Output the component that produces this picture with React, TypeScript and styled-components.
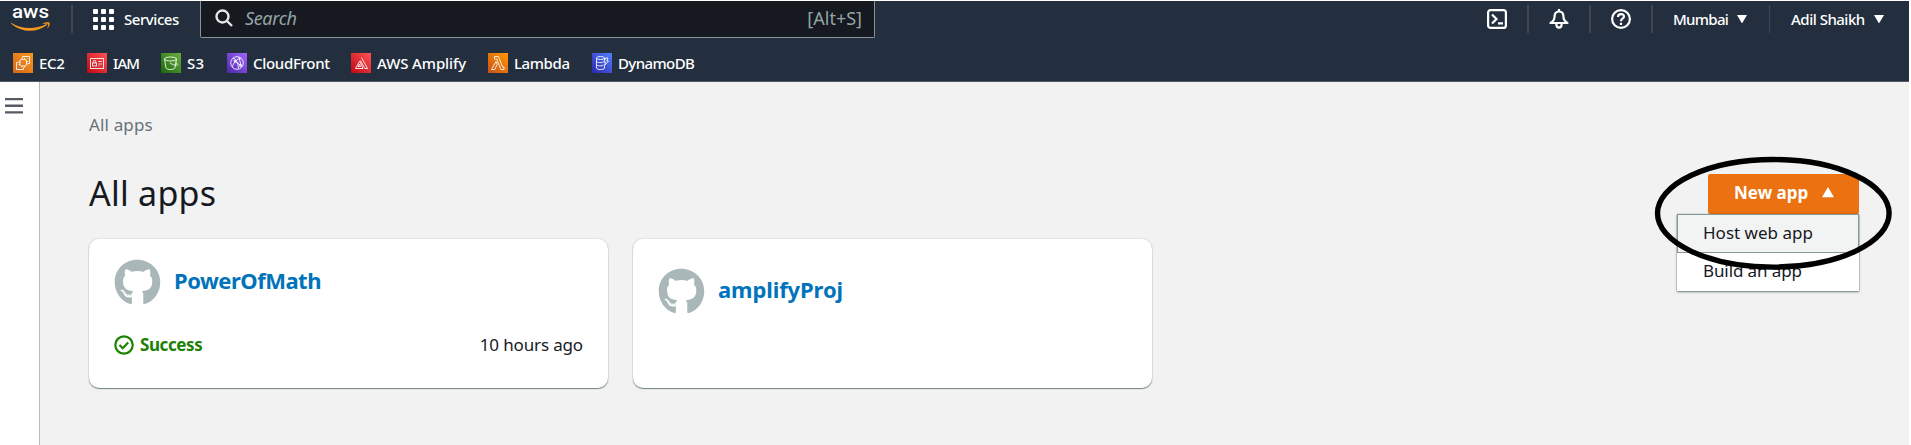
import React from 'react';
import styled, { createGlobalStyle } from 'styled-components';
import { FaGithub } from 'react-icons/fa';

const Global = createGlobalStyle`
  * { box-sizing: border-box; }
  body { margin: 0; background: #fff; font-family: "Noto Sans", "Open Sans", sans-serif; color: #16191f; }
`;

const Page = styled.div`
  width: 1911px;
  height: 445px;
  display: flex;
  flex-direction: column;
  overflow: hidden;
`;

const Header = styled.header`
  height: 82px;
  width: 1909px;
  background: #232f3e;
  border-top: 1px solid #fff;
  border-bottom: 1px solid #545b64;
  color: #fff;
`;

const TopRow = styled.div`
  display: flex;
  align-items: flex-start;
  height: 41px;
`;

const Line = styled.span<{ $size: number; $gap?: number; $weight?: number }>`
  display: block;
  white-space: nowrap;
  font-size: ${p => p.$size}px;
  letter-spacing: ${p => p.$gap ?? 0}px;
  font-weight: ${p => p.$weight ?? 400};
`;

const Logo = styled.div`
  width: 71px;
  padding-left: 10px;
  svg { display: block; overflow: visible; }
`;

const Divider = styled.div<{ $w?: number }>`
  width: ${p => p.$w ?? 2}px;
  height: 28px;
  margin-top: 4px;
  background: #414750;
`;

const Services = styled.div`
  display: flex;
  align-items: center;
  gap: 10px;
  width: 127px;
  height: 36px;
  padding-left: 20px;
`;

const Search = styled.div`
  display: flex;
  align-items: center;
  width: 675px;
  height: 37px;
  padding: 0 12px 2px 14px;
  background: #16191f;
  border: 1px solid #879596;
  border-top: 0;
  border-radius: 0 0 2px 2px;
  color: #95a5a6;
  svg { margin-right: 12px; }
`;

const Placeholder = styled(Line)`
  flex: 1;
  font-style: italic;
`;

const Tools = styled.div`
  display: flex;
  margin-left: auto;
`;

const IconTool = styled.div`
  width: 60px;
  height: 36px;
  display: flex;
  align-items: center;
  justify-content: center;
`;

const MenuTool = styled.div<{ $w: number; $pad: number }>`
  width: ${p => p.$w}px;
  height: 36px;
  padding-left: ${p => p.$pad}px;
  display: flex;
  align-items: center;
  gap: 9px;
`;

const Favorites = styled.nav`
  display: flex;
  align-items: center;
  height: 41px;
  padding-left: 13px;
`;

const Favorite = styled.div<{ $w: number }>`
  display: flex;
  align-items: center;
  gap: 6px;
  width: ${p => p.$w}px;
`;

const Tile = styled.span<{ $from: string; $to: string }>`
  display: block;
  flex: none;
  width: 20px;
  height: 20px;
  background: linear-gradient(45deg, ${p => p.$from}, ${p => p.$to});
  svg { display: block; }
`;

const Body = styled.div`
  flex: 1;
  display: flex;
  width: 1909px;
`;

const Rail = styled.aside`
  width: 40px;
  padding: 16px 0 0 5px;
  background: #fff;
  border-right: 1px solid #b4bbbd;
  svg { display: block; }
`;

const Main = styled.main`
  flex: 1;
  padding: 0 50px 0 49px;
  background: #f2f2f2;
`;

const Crumb = styled.div`
  height: 83px;
  padding-top: 31px;
  color: #687078;
  line-height: 24px;
`;

const TitleRow = styled.div`
  display: flex;
  justify-content: space-between;
  height: 74px;
`;

const Title = styled.h1`
  margin: 0;
  padding-top: 7px;
  line-height: 42px;
`;

const MenuAnchor = styled.div`
  position: relative;
  width: 151px;
  height: 41px;
  margin-top: 9px;
`;

const NewApp = styled.button`
  display: flex;
  align-items: center;
  gap: 14px;
  width: 151px;
  height: 40px;
  padding: 0 0 3px 26px;
  border: 0;
  border-radius: 2px;
  background: #ec7211;
  color: #fff;
  font-family: inherit;
`;

const Menu = styled.div`
  position: absolute;
  top: 40px;
  right: 0;
  width: 182px;
  background: #fff;
  box-shadow: 0 1px 2px rgba(0, 28, 36, 0.55), 0 0 1px rgba(0, 28, 36, 0.3);
`;

const MenuItem = styled.div<{ $active?: boolean }>`
  height: ${p => (p.$active ? 39 : 38)}px;
  padding-left: 25px;
  line-height: ${p => (p.$active ? 35 : 34)}px;
  border: 1px solid ${p => (p.$active ? '#879596' : 'transparent')};
  background: ${p => (p.$active ? '#f2f3f3' : '#fff')};
`;

const Highlight = styled.svg`
  position: absolute;
  left: -54px;
  top: -18px;
  overflow: visible;
`;

const Cards = styled.div`
  display: flex;
  gap: 25px;
`;

const Card = styled.section`
  width: 519px;
  height: 149px;
  padding: 0 25px;
  background: #fff;
  border-radius: 10px;
  box-shadow: 0 1px 1px rgba(0, 28, 36, 0.5), 0 0 1px 1px rgba(0, 28, 36, 0.06);
`;

const CardHead = styled.div<{ $top: number }>`
  display: flex;
  align-items: flex-start;
  gap: 13px;
  padding-top: ${p => p.$top}px;
  color: #0073bb;
  svg { color: #aab7b8; }
`;

const CardFoot = styled.div`
  display: flex;
  align-items: center;
  justify-content: space-between;
  margin-top: 27px;
  line-height: 24px;
`;

const Status = styled.div`
  display: flex;
  align-items: center;
  gap: 6px;
  color: #1d8102;
`;

const AppName = styled(Line)`
  line-height: 30px;
  padding-top: 6px;
`;

const Caret = ({ up, size = 10 }: { up?: boolean; size?: number }) => (
  <svg width={size} height={size * 0.85} viewBox="0 0 10 8.5" fill="#fff">
    <path d={up ? 'M5 0L10 8.5H0Z' : 'M0 0H10L5 8.5Z'} />
  </svg>
);

const favorites = [
  { name: 'EC2', w: 74, gap: -0.3, from: '#d4661c', to: '#f8981d', art: <><rect x="7" y="6.5" width="6.500" height="6.500" rx="1.500" /><path d="M9.500 5V3.500H16.500V10.500H15M5.500 9.500H3.500V16.500H10.500V14.500" /><path d="M9 5v1.500M11.500 5v1.500M9 13v1.500M11.500 13v1.500M5.500 9h1.500M5.500 11.500h1.500M13.500 8.500h1.500M13.500 11h1.500" /></> },
  { name: 'IAM', w: 74, gap: -0.9, from: '#bd0816', to: '#ff5252', art: <><rect x="3.500" y="5.500" width="13" height="10" /><rect x="5.500" y="10" width="4" height="3" /><path d="M6.300 10V8.500a1.200 1.200 0 012.400 0V10M11.500 8.500h3M11.500 11h2M14 11h1M11.500 13h1" /></> },
  { name: 'S3', w: 66, gap: 0.3, from: '#1b660f', to: '#6cae3e', art: <><ellipse cx="9.500" cy="6" rx="6" ry="2" /><path d="M3.500 6l1.500 9c1 2 8 2 9 0l1.500-9M9 10c3 2 7 3 7.500 1.700.2-.8-1-1.500-2-2" /></> },
  { name: 'CloudFront', w: 124, gap: -0.3, from: '#4d27a8', to: '#a166ff', art: <><circle cx="10" cy="10" r="6.300" /><path d="M6 5.500c3 0 5 4 5.500 10M14 5c-4 1-8 5-8.500 9M7 8l8 5M12 4l2 9" /><circle cx="8" cy="8" r="1" /><circle cx="13.500" cy="12.500" r="1.200" /></> },
  { name: 'AWS Amplify', w: 137, gap: -0.1, from: '#bd0816', to: '#ff5252', art: <><path d="M10.500 4.500L16.500 15.500H13.800L9.500 7.500M9 8.500L12 15.500H4.500L8.500 8.500ZM7 13.500H9.500L8.500 11Z" /></> },
  { name: 'Lambda', w: 104, gap: -0.4, from: '#c8511b', to: '#f90', art: <><path d="M6.500 3.500H10.500L14.500 14H16V16.500H12.800L8.800 6H6.500ZM8 8.500L9.200 11.500L6.800 16.500H3.500Z" /></> },
  { name: 'DynamoDB', w: 110, gap: -0.6, from: '#2e27ad', to: '#527fff', art: <><ellipse cx="8.500" cy="5" rx="4" ry="1.500" /><path d="M4.500 5v10c0 2 8 2 8 0v-2M12.500 5v2M4.500 8.300c0 1.600 6 1.600 7 .5M4.500 11.600c0 1.600 6 1.600 7 .5M13.500 5h2.500l-1.200 3h1.700l-4 4.500 1-3.500h-1.500z" /></> },
];

export default function App() {
  return (
    <Page>
      <Global />
      <Header>
        <TopRow>
          <Logo>
            <svg width="42" height="32" viewBox="0 0 42 32">
              <text x="2" y="17.300" fontFamily="Roboto" fontSize="18.500" fontWeight="500" fill="#fff" textLength="37" lengthAdjust="spacingAndGlyphs">aws</text>
              <path d="M1 21.700C11 28.200 25 28.700 36 23.200C37 22.800 37.600 23.700 36.800 24.300C27 31.800 11.500 32 1 22.400Z" fill="#f7981f" />
              <path d="M33 22.300C35.500 20.800 39 20.900 39.600 21.700C40.200 22.700 39.300 26 37 28C38 25.500 38.600 23.600 38 23C37.400 22.500 35 22.700 33 22.900Z" fill="#f7981f" />
            </svg>
          </Logo>
          <Divider />
          <Services>
            <svg width="21" height="21" viewBox="0 0 21 21" fill="#fff">
              {[0, 8, 16].map(y => [0, 8, 16].map(x => <rect key={`${x}-${y}`} x={x} y={y} width="5" height="5" rx="1" />))}
            </svg>
            <Line $size={15} $gap={-0.45} $weight={500}>Services</Line>
          </Services>
          <Search>
            <svg width="18" height="18" viewBox="0 0 18 18" fill="none" stroke="#e4e8ea" strokeWidth="2.400">
              <circle cx="7.500" cy="7.500" r="6" /><path d="M12 12l5 5" />
            </svg>
            <Placeholder $size={18} $gap={-0.35}>Search</Placeholder>
            <Line $size={18}>[Alt+S]</Line>
          </Search>
          <Tools>
            <IconTool>
              <svg width="20" height="20" viewBox="0 0 20 20" fill="none" stroke="#fff" strokeWidth="2.200">
                <rect x="1.100" y="1.100" width="17.800" height="17.800" rx="2.500" /><path d="M5 5.500L9.500 10L5 14.500M11 14.300h5" />
              </svg>
            </IconTool>
            <Divider />
            <IconTool>
              <svg width="20" height="20" viewBox="0 0 20 20" fill="none" stroke="#fff" strokeWidth="2.200" strokeLinejoin="round">
                <path d="M10 0v3M10 2.500C6.500 2.500 5.500 5 5.500 8C5.500 11 4 12.500 1.500 14H18.500C16 12.500 14.500 11 14.500 8C14.500 5 13.500 2.500 10 2.500ZM7.300 15C7.300 19.800 12.700 19.800 12.700 15" />
              </svg>
            </IconTool>
            <Divider />
            <IconTool>
              <svg width="20" height="20" viewBox="0 0 20 20" fill="none" stroke="#fff" strokeWidth="2.200">
                <circle cx="10" cy="10" r="8.900" /><path d="M7 8C7 4.300 13 4.300 13 7.500C13 9.500 10 9.500 10 12.300M10 13.800v2.200" />
              </svg>
            </IconTool>
            <Divider />
            <MenuTool $w={116} $pad={20}><Line $size={15} $gap={-0.7} $weight={500}>Mumbai</Line><Caret /></MenuTool>
            <Divider $w={1} />
            <MenuTool $w={139} $pad={21}><Line $size={15} $gap={-0.5} $weight={500}>Adil Shaikh</Line><Caret /></MenuTool>
          </Tools>
        </TopRow>
        <Favorites>
          {favorites.map(f => (
            <Favorite key={f.name} $w={f.w}>
              <Tile $from={f.from} $to={f.to}>
                <svg width="20" height="20" viewBox="0 0 20 20" fill="none" stroke="#fff" strokeOpacity=".85" strokeWidth="1">{f.art}</svg>
              </Tile>
              <Line $size={15} $weight={500} $gap={f.gap}>{f.name}</Line>
            </Favorite>
          ))}
        </Favorites>
      </Header>
      <Body>
        <Rail>
          <svg width="18" height="16" viewBox="0 0 18 16" fill="#545b64">
            <path d="M0 0h18v2.300H0zM0 6.600h18v2.300H0zM0 13.200h18v2.300H0z" />
          </svg>
        </Rail>
        <Main>
          <Crumb><Line $size={17} $gap={0.15}>All apps</Line></Crumb>
          <TitleRow>
            <Title><Line $size={34} $gap={0.25}>All apps</Line></Title>
            <MenuAnchor>
              <NewApp><Line $size={17} $weight={700}>New app</Line><Caret up size={12} /></NewApp>
              <Menu>
                <MenuItem $active><Line $size={17}>Host web app</Line></MenuItem>
                <MenuItem><Line $size={17} $gap={-0.1}>Build an app</Line></MenuItem>
              </Menu>
              <Highlight width="240" height="114"><ellipse cx="119.300" cy="57.300" rx="115.800" ry="53.800" fill="none" stroke="#000" strokeWidth="5.400" /></Highlight>
            </MenuAnchor>
          </TitleRow>
          <Cards>
            <Card>
              <CardHead $top={20}><FaGithub size={47} /><AppName $size={22} $gap={-0.5} $weight={700}>PowerOfMath</AppName></CardHead>
              <CardFoot>
                <Status>
                  <svg width="20" height="20" viewBox="0 0 20 20" fill="none" stroke="currentColor" strokeWidth="2.200">
                    <circle cx="10" cy="10" r="8.700" /><path d="M5.500 10l3.200 3.200L14.200 7.500" />
                  </svg>
                  <Line $size={17} $gap={-0.4} $weight={700}>Success</Line>
                </Status>
                <Line $size={17} $gap={-0.15}>10 hours ago</Line>
              </CardFoot>
            </Card>
            <Card>
              <CardHead $top={29}><FaGithub size={47} /><AppName $size={22} $gap={-0.1} $weight={700}>amplifyProj</AppName></CardHead>
            </Card>
          </Cards>
        </Main>
      </Body>
    </Page>
  );
}
